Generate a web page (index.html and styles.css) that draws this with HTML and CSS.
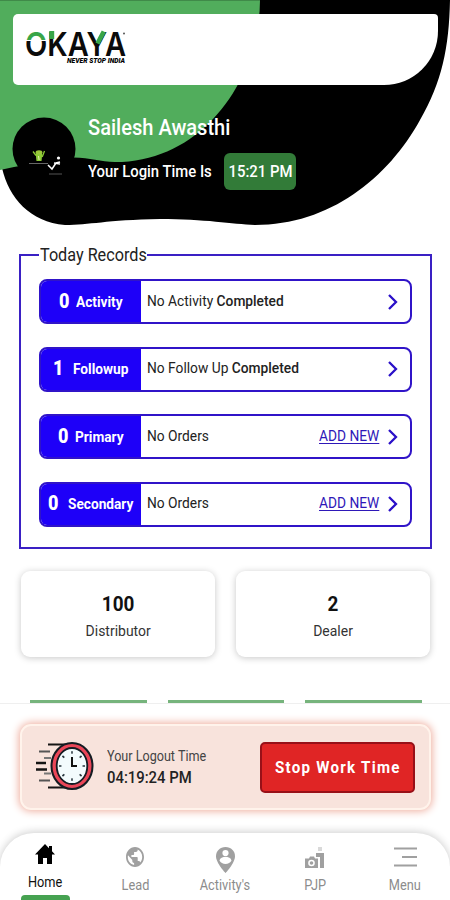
FILE: index.html
```html
<!DOCTYPE html>
<html lang="en">
<head>
<meta charset="utf-8">
<title>Okaya</title>
<link rel="stylesheet" href="styles.css">
</head>
<body>
<div class="app">
  <header class="hero">
    <svg class="hero-bg" width="450" height="230" viewBox="0 0 450 230">
      <path d="M0 0H450C449 48 442 82 420 120C388 178 330 225 255 225C232 224 205 219 160 219C105 220 90 225 65 225C30 222 9 198 2 168L0 160Z" fill="#000"/>
      <path d="M0 0H260C260 75 206 162 115 162C98 162 87 156 65 158L14 167L0 170Z" fill="#51ad5c"/>
      <circle cx="44" cy="149" r="31.5" fill="#000"/>
      <path d="M0 .5H450" stroke="#000" stroke-opacity=".2"/>
    </svg>
    <div class="logo-card">
      <svg width="110" height="58" viewBox="-3 -10 110 58" class="logo">
        <defs>
          <linearGradient id="go" gradientUnits="userSpaceOnUse" x1="0" y1="3" x2="0" y2="29"><stop offset=".34" stop-color="#38a548"/><stop offset=".34" stop-color="#fff"/><stop offset=".38" stop-color="#fff"/><stop offset=".38" stop-color="#0b0b0b"/></linearGradient>
        </defs>
        <text class="word" y="27.500" x="-1" textLength="101" lengthAdjust="spacingAndGlyphs"><tspan fill="url(#go)">O</tspan>KAYA</text>
        <path d="M23.200 3h5v8h-5z" fill="#38a548"/>
        <path d="M71.500 15.500L77.800 3.500" stroke="#38a548" stroke-width="4.600"/>
        <circle cx="98" cy="5.500" r="1" fill="#555"/>
        <text class="tagline" x="41" y="34.500" textLength="58" lengthAdjust="spacingAndGlyphs">NEVER STOP INDIA</text>
      </svg>
    </div>
    <div class="profile">
      <svg class="avatar" width="63" height="63" viewBox="0 0 63 63">
        <ellipse cx="26" cy="35.500" rx="3.400" ry="2.200" fill="#9bc83a"/>
        <path d="M22.700 37h6.600l-.8 7h-5z" fill="#8ccb35"/>
        <path d="M20 34.500l3 4M31.500 34l-2.300 6" stroke="#8ccb35" stroke-width="1.300"/>
        <path d="M25.500 39l.6 4" stroke="#e3efad" fill="none"/>
        <path d="M16 46.500h19" stroke="#666" stroke-width="1"/>
        <circle cx="45.500" cy="41" r="1.600" fill="#fff"/>
        <path d="M47 45l-4 1-4 6-4-4M41 46l6 1" stroke="#fff" stroke-width="1.500" fill="none"/>
        <path d="M36 57h13" stroke="#555"/>
      </svg>
      <div class="who">
        <div class="name"><span class="t">Sailesh Awasthi</span></div>
        <div class="login"><div class="login-label"><span class="t">Your Login Time Is</span></div><div class="badge"><span class="t mid">15:21 PM</span></div></div>
      </div>
    </div>
  </header>

  <fieldset class="records">
    <legend><span class="t">Today Records</span></legend>
    <div class="row r1"><div class="tag"><b><span class="t">0</span></b><span class="t">Activity</span></div><div class="msg"><span class="t">No Activity <em>Completed</em></span></div><svg class="chev" width="12" height="16" viewBox="0 0 12 16"><path d="M2 1l7 7-7 7"/></svg></div>
    <div class="row r2"><div class="tag"><b><span class="t">1</span></b><span class="t">Followup</span></div><div class="msg"><span class="t">No Follow Up <em>Completed</em></span></div><svg class="chev" width="12" height="16" viewBox="0 0 12 16"><path d="M2 1l7 7-7 7"/></svg></div>
    <div class="row r3"><div class="tag"><b><span class="t">0</span></b><span class="t">Primary</span></div><div class="msg"><span class="t">No Orders</span></div><a class="add"><span class="t">ADD NEW</span></a><svg class="chev" width="12" height="16" viewBox="0 0 12 16"><path d="M2 1l7 7-7 7"/></svg></div>
    <div class="row r4"><div class="tag"><b><span class="t">0</span></b><span class="t">Secondary</span></div><div class="msg"><span class="t">No Orders</span></div><a class="add"><span class="t">ADD NEW</span></a><svg class="chev" width="12" height="16" viewBox="0 0 12 16"><path d="M2 1l7 7-7 7"/></svg></div>
  </fieldset>

  <div class="stats">
    <div class="stat"><strong><span class="t mid">100</span></strong><span class="t mid">Distributor</span></div>
    <div class="stat"><strong><span class="t mid">2</span></strong><span class="t mid">Dealer</span></div>
  </div>
  <div class="peek"><i></i><i></i><i></i></div>

  <section class="footer">
    <div class="logout">
      <svg class="clock" width="60" height="50" viewBox="1 0 60 50">
        <g stroke="#151515" stroke-width="2"><path d="M13 2.500h22M13 45.500h22"/><path d="M4 9.500h11M4 38.500h11" stroke="#555"/><path d="M9 16h7M9 31.500h7" stroke="#777"/><path d="M1 21h10M1 27.500h11" stroke-width="2.500"/></g>
        <ellipse cx="37" cy="24" rx="20.500" ry="23" fill="#ea4658" stroke="#141b22" stroke-width="2"/>
        <ellipse cx="37" cy="24" rx="15.300" ry="18" fill="#f3fbfd" stroke="#141b22" stroke-width="1.800"/>
        <ellipse cx="37" cy="24" rx="11.800" ry="13.500" fill="none" stroke="#26333b" stroke-width="2.500" pathLength="80" stroke-dasharray="1.600 8.400" stroke-dashoffset=".8"/>
        <path d="M37 15v9h5" fill="none" stroke="#111" stroke-width="2"/>
      </svg>
      <div class="time"><span class="t">Your Logout Time</span><strong><span class="t">04:19:24 PM</span></strong></div>
      <button><span class="t mid">Stop Work Time</span></button>
    </div>
    <nav>
      <div class="tab on"><svg width="20" height="20" viewBox="0 0 20 20"><path d="M10 0L0 10.500h3V20h5v-6h4v6h5v-9.500h3L17 7.200V2h-3v2.200z"/></svg><span class="t mid">Home</span><i></i></div>
      <div class="tab"><svg width="18" height="20" viewBox="2 2 20 20" preserveAspectRatio="none"><path d="M12 2C6.480 2 2 6.480 2 12s4.480 10 10 10 10-4.480 10-10S17.520 2 12 2zm-1 17.930c-3.950-.49-7-3.850-7-7.930 0-.62.080-1.210.21-1.790L9 15v1c0 1.100.9 2 2 2v1.930zm6.900-2.540c-.26-.81-1-1.390-1.900-1.390h-1v-3c0-.55-.45-1-1-1H8v-2h2c.55 0 1-.45 1-1V7h2c1.100 0 2-.9 2-2v-.41c2.930 1.190 5 4.060 5 7.410 0 2.080-.8 3.970-2.100 5.390z"/></svg><span class="t mid">Lead</span></div>
      <div class="tab pin"><svg width="19" height="26" viewBox="0 0 19 26"><path d="M9.500 0C4 0 0 4 0 9.200C0 16 9.500 26 9.500 26S19 16 19 9.200C19 4 15 0 9.500 0z"/><circle cx="9.500" cy="6" r="3.100" fill="#fff"/><path d="M3.500 13.500c1-5 11-5 12 0-2 4.500-10 4.500-12 0z" fill="#fff"/></svg><span class="t mid">Activity's</span></div>
      <div class="tab pjp"><svg width="20" height="23" viewBox="0 0 20 23"><path d="M0 12.500h4l1-2h4l1 2h3V22H0z"/><circle cx="6.500" cy="17" r="3.300" fill="#fff"/><circle cx="6.500" cy="17" r="1.800"/><path d="M11 7h8v15h-4V11h-4z"/><path d="M13 1h4v4h-4z" opacity=".4"/></svg><span class="t mid">PJP</span></div>
      <div class="tab menu"><svg width="23" height="20" viewBox="0 0 23 20"><path d="M0 1.500h23M8 10h15M0 18.500h23" stroke="#a0a0a0" stroke-width="2.200"/></svg><span class="t mid">Menu</span></div>
    </nav>
  </section>
</div>
</body>
</html>
```
FILE: styles.css
```css
* { box-sizing: border-box; }
body { margin: 0; background: #fff; font-family: Roboto, "Liberation Sans", sans-serif; color: #222; }
.app { width: 450px; height: 900px; overflow: hidden; display: flex; flex-direction: column; }
.t { display: inline-block; white-space: nowrap; transform: scaleX(.9); transform-origin: 0 50%; }
.t.mid { transform-origin: 50% 50%; }
em { font-style: normal; font-weight: 500; }

.hero { position: relative; height: 245px; flex: none; padding: 14px 12px 0 13px; }
.hero-bg { position: absolute; left: 0; top: 0; }
.logo-card { position: relative; height: 71px; background: #fff; border-radius: 5px 4px 54px 5px; padding: 4px 0 0 10px; }
.logo { display: block; overflow: visible; }
.word { font: 600 33px Inter, sans-serif; fill: #0b0b0b; }
.tagline { font: italic 900 6.500px Roboto, sans-serif; }
.profile { position: relative; display: flex; padding-top: 32px; }
.avatar { flex: none; }
.who { margin: -4px 0 0 12px; }
.name { color: #fff; font-size: 22.300px; line-height: 28px; font-weight: 500; }
.login { display: flex; align-items: center; margin-top: 12px; height: 37px; color: #fff; font-weight: 500; }
.login-label { width: 136px; font-size: 16.500px; }
.badge { width: 72px; height: 37px; background: #327b38; border-radius: 6px; display: flex; align-items: center; justify-content: center; font-size: 16.500px; }

.records { flex: none; height: 304px; margin: 0 18px 0 19px; border: 2px solid #3a20c4; padding: 14px 18px 0; display: flex; flex-direction: column; gap: 22.500px; min-width: 0; }
legend { width: 108px; padding: 0 0 0 1px; font-size: 18px; line-height: 20px; color: #222; }
.row { height: 45px; flex: none; display: flex; align-items: center; border: 2px solid #3014c8; border-radius: 8px; overflow: hidden; }
.tag { width: 100px; align-self: stretch; background: #1e00f8; color: #fff; display: flex; align-items: center; font-size: 15.200px; font-weight: 700; }
.tag b { font-size: 20px; }
.tag b .t { position: relative; top: -1px; }
.r1 b { margin-left: 18px; width: 17px; }
.r2 b { margin-left: 12px; width: 20px; }
.r3 b { margin-left: 17px; width: 17px; }
.r4 b { margin-left: 7px; width: 20px; }
.msg { flex: 1; padding: 0 0 2px 6px; font-size: 15.300px; color: #222; }
.add { width: 60px; margin-right: 8px; padding-bottom: 2px; font-size: 15.300px; color: #2e18b8; text-decoration: none; }
.add .t { text-decoration: underline; text-underline-offset: 2px; }
.chev { fill: none; stroke: #2a10c8; stroke-width: 2.300; margin-right: 11px; }

.stats { display: flex; gap: 21px; padding: 22px 20px 0 21px; flex: none; }
.stat { flex: 1; height: 86px; border-radius: 9px; background: #fff; box-shadow: 0 1px 7px rgba(0,0,0,.22); display: flex; flex-direction: column; align-items: center; padding-top: 20px; font-size: 15.500px; line-height: 24px; color: #333; }
.stat strong { font-size: 21px; line-height: 26px; margin-bottom: 2px; color: #111; }
.peek { display: flex; gap: 21px; padding: 43px 28px 0 30px; flex: none; }
.peek i { flex: 1; height: 3px; background: #76b47c; }

.footer { flex: 1; border-top: 1px solid #efefef; display: flex; flex-direction: column; padding-top: 20px; }
.logout { height: 86px; flex: none; margin: 0 19px 0 20px; border: 2px solid #fff3eb; border-radius: 11px; background: #f8e3dc; box-shadow: 0 0 8px 1px #eeab9b; display: flex; align-items: center; padding: 0 14px; }
.clock { flex: none; }
.time { flex: 1; margin-left: 11px; display: flex; flex-direction: column; align-items: flex-start; font-size: 14px; line-height: 22px; color: #444; }
.time strong { font-size: 16.500px; font-weight: 500; color: #222; }
button { width: 155px; height: 51px; flex: none; padding: 0; display: flex; align-items: center; justify-content: center; border: 2px solid #981018; border-radius: 5px; background: #e02525; color: #fff; font: 700 16.800px Roboto, sans-serif; letter-spacing: 1.400px; }
nav { margin-top: 23px; flex: 1; display: flex; background: #fff; border-radius: 34px 34px 0 0; box-shadow: 0 -1px 8px rgba(0,0,0,.2); }
.tab { flex: 1; display: flex; flex-direction: column; align-items: center; padding-top: 14px; font-size: 14.200px; line-height: 20px; color: #8c8c8c; fill: #a0a0a0; }
.tab svg { flex: none; margin-bottom: 8px; }
.on { padding-top: 11px; color: #111; fill: #000; font-weight: 400; }
.tab i { width: 49px; height: 5px; margin-top: 3px; border-radius: 4px 4px 0 0; background: #46a251; }
.pin svg { margin-bottom: 2px; }
.pjp { padding-top: 13px; }
.pjp svg { margin-bottom: 6px; }
```
